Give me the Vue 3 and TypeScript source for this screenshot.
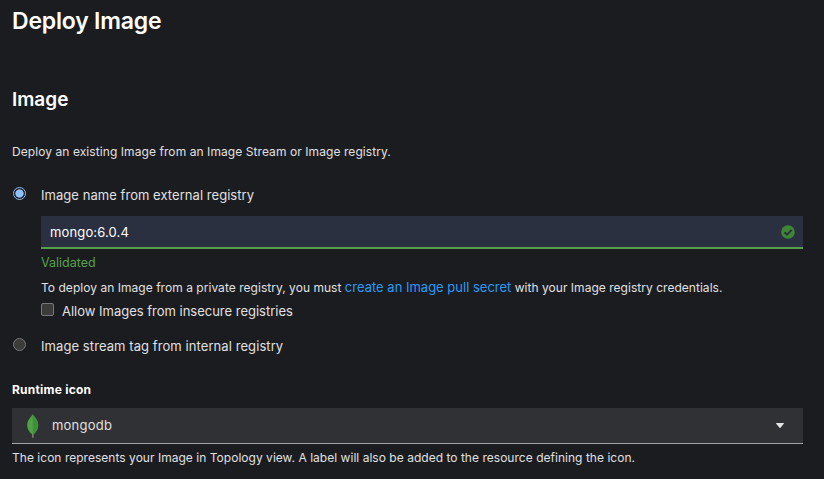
<script setup lang="ts">
import { ref } from 'vue'

type Source = 'external' | 'internal'

const source = ref<Source>('external')
const imageName = ref('mongo:6.0.4')
const allowInsecure = ref(false)
const runtimeIcon = ref('mongodb')
</script>

<template>
  <main class="page">
    <h1 class="title">Deploy Image</h1>

    <h2 class="section-title">Image</h2>
    <p class="description">Deploy an existing Image from an Image Stream or Image registry.</p>

    <div class="option external">
      <input id="external" v-model="source" class="radio" type="radio" name="source" value="external" />
      <div class="option-body">
        <label class="label" for="external">Image name from external registry</label>
        <div class="text-field">
          <input v-model="imageName" class="text-input" type="text" spellcheck="false" aria-label="Image name" />
          <svg class="check" viewBox="0 0 14 14" aria-hidden="true">
            <circle cx="7" cy="7" r="6.8" fill="#3e8635" />
            <path d="M3.500 7.200 6 9.600 10.700 4.900" fill="none" stroke="#2b3040" stroke-width="2" />
          </svg>
        </div>
        <p class="validated">Validated</p>
        <p class="hint"><span class="hint-lead">To deploy an Image from a private registry, you must </span><a class="link" href="#">create an Image pull secret</a><span class="hint-tail"> with your Image registry credentials.</span></p>
        <label class="checkbox-row">
          <input v-model="allowInsecure" class="checkbox" type="checkbox" />
          <span class="label insecure-label">Allow Images from insecure registries</span>
        </label>
      </div>
    </div>

    <div class="option internal">
      <input id="internal" v-model="source" class="radio" type="radio" name="source" value="internal" />
      <label class="label internal-label" for="internal">Image stream tag from internal registry</label>
    </div>

    <h3 class="field-title">Runtime icon</h3>
    <button class="select" type="button">
      <svg class="leaf" viewBox="0 0 12 24" aria-hidden="true">
        <path d="M5.100 19h1.200l.3 4.800H5.300Z" fill="#8c8b7c" />
        <path d="M5.700 .3C6.200 2 11.200 5 11.200 11C11.200 16 8.200 19 5.900 20.800C3.200 19 .2 16 .2 11C.2 5.500 5 2.500 5.700 .3Z" fill="#4fa345" />
        <path d="M5.700 .3C6.200 2 11.200 5 11.200 11C11.200 16 8.200 19 5.900 20.800Z" fill="#3f8f3b" />
      </svg>
      <span class="select-value">{{ runtimeIcon }}</span>
      <svg class="caret" viewBox="0 0 8 5" aria-hidden="true">
        <path d="M.5 0h7q.8.2.3.8L4.500 4.700q-.5.5-1 0L.2.800Q-.3.200.5 0Z" fill="#e4e4e5" />
      </svg>
    </button>
    <p class="helper">The icon represents your Image in Topology view. A label will also be added to the resource defining the icon.</p>
  </main>
</template>

<style>
body {
  background: #1b1c20;
}
</style>

<style scoped>
.page {
  box-sizing: border-box;
  display: flex;
  flex-direction: column;
  height: 479px;
  padding: 6px 21px 0 12px;
  overflow: hidden;
  background: #1b1c20;
  color: #e0e0e0;
  font: 12px/19px Inter, "Liberation Sans", sans-serif;
}

h1,
h2,
h3,
p {
  margin: 0;
}

.title {
  color: #fff;
  font-size: 23px;
  font-weight: 600;
  line-height: 30px;
  letter-spacing: -0.2px;
}

.section-title {
  margin-top: 52px;
  color: #fff;
  font-size: 19px;
  font-weight: 600;
  line-height: 24px;
}

.description {
  margin-top: 30px;
  letter-spacing: 0.075px;
}

.option {
  display: flex;
  align-items: flex-start;
  gap: 14px;
}

.external {
  margin-top: 24px;
}

.internal {
  margin-top: 15px;
}

.option-body {
  display: flex;
  flex: 1;
  flex-direction: column;
}

.label {
  font-size: 13px;
  line-height: 20px;
  letter-spacing: 0.05px;
}

.internal-label {
  letter-spacing: 0.08px;
}

.insecure-label {
  letter-spacing: -0.01px;
}

.radio,
.checkbox {
  box-sizing: border-box;
  flex: none;
  width: 13px;
  height: 13px;
  appearance: none;
  border: 1px solid #77787a;
  background: #3b3b3c;
}

.radio {
  margin: 2px 1px 0;
  border-radius: 50%;
}

.radio:checked {
  border-color: #8fb9f2;
  background: radial-gradient(circle, #8fc1ff 3.8px, #1b1c20 4.5px);
}

.checkbox {
  margin: 2px 0 0;
  border-radius: 2px;
}

.text-field {
  box-sizing: border-box;
  display: flex;
  align-items: center;
  height: 33px;
  margin-top: 11px;
  padding: 0 8px 0 9px;
  border-bottom: 2px solid #57a04a;
  background: #2b3040;
}

.text-input {
  flex: 1;
  min-width: 0;
  padding: 2px 0 0;
  border: 0;
  outline: 0;
  background: none;
  color: #fff;
  font: inherit;
  font-size: 13px;
  letter-spacing: 0.14px;
}

.check {
  width: 14px;
  height: 14px;
}

.validated {
  margin-top: 4px;
  color: #57a04a;
  font-size: 12.5px;
}

.hint {
  margin-top: 6px;
  white-space: pre;
}

.hint-lead {
  letter-spacing: 0.035px;
}

.hint-tail {
  letter-spacing: 0.03px;
}

.link {
  color: #2b9af3;
  font-size: 13px;
  text-decoration: none;
}

.checkbox-row {
  display: flex;
  gap: 8px;
  margin-top: 4px;
}

.field-title {
  margin-top: 24px;
  color: #fff;
  font-size: 12px;
  font-weight: 700;
  line-height: 19px;
  letter-spacing: 0.22px;
}

.select {
  box-sizing: border-box;
  display: flex;
  align-items: center;
  height: 36px;
  margin: 9px 0 0;
  padding: 0 19px 0 15px;
  border: 0;
  border-bottom: 1px solid #a4a5a8;
  background: #303134;
  color: #e0e0e0;
  font: inherit;
  font-size: 13px;
}

.leaf {
  width: 12px;
  height: 24px;
}

.select-value {
  flex: 1;
  margin-left: 13px;
  text-align: left;
  letter-spacing: 0.22px;
}

.caret {
  width: 8px;
  height: 5px;
}

.helper {
  margin-top: 4px;
  letter-spacing: 0.027px;
  white-space: nowrap;
}
</style>
